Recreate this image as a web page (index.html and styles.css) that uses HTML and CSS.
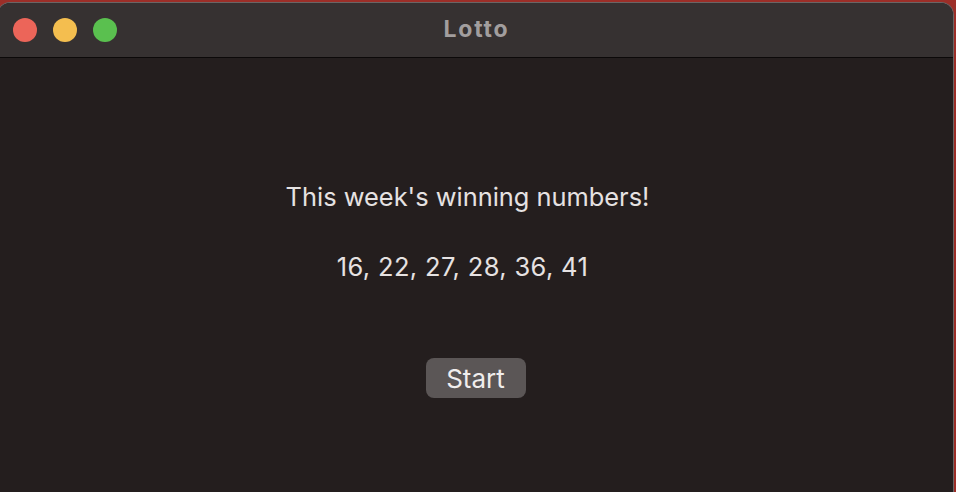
FILE: index.html
```html
<!DOCTYPE html>
<html>
<head>
<meta charset="utf-8">
<link rel="stylesheet" href="styles.css">
</head>
<body>
<div class="window">
  <div class="titlebar">
    <div class="lights">
      <span class="light red"></span>
      <span class="light yellow"></span>
      <span class="light green"></span>
    </div>
    <div class="title">Lotto</div>
  </div>
  <div class="content">
    <p class="headline">This week's winning numbers!</p>
    <p class="numbers">16, 22, 27, 28, 36, 41</p>
    <button class="start">Start</button>
  </div>
</div>
</body>
</html>
```
FILE: styles.css
```css
html, body {
  margin: 0;
  padding: 0;
  height: 100%;
  overflow: hidden;
}
body {
  background: #9c2e28;
  font-family: Inter, "Open Sans", "Liberation Sans", sans-serif;
}
.window {
  margin: 2px 2px 0 -3px;
  height: 492px;
  background: #241e1e;
  border-radius: 13px 13px 0 0;
  border: 1px solid #6a6565;
  border-bottom: none;
  box-sizing: border-box;
  overflow: hidden;
  display: flex;
  flex-direction: column;
}
.titlebar {
  position: relative;
  height: 55px;
  flex: none;
  background: #363131;
  border-bottom: 1px solid #0c0909;
  display: flex;
  align-items: center;
  justify-content: center;
  padding-bottom: 2px;
  box-sizing: border-box;
}
.lights {
  position: absolute;
  left: 15px;
  top: 15px;
  display: flex;
  gap: 16px;
}
.light {
  width: 24px;
  height: 24px;
  border-radius: 50%;
}
.red { background: #ec6559; }
.yellow { background: #f4be4f; }
.green { background: #5ac04f; }
.title {
  color: #a29e9e;
  font-weight: 700;
  font-size: 23px;
  letter-spacing: 1.8px;
  padding-left: 2px;
}
.content {
  flex: 1;
  display: flex;
  flex-direction: column;
  align-items: center;
  padding-top: 124px;
  color: #e6e2e2;
}
.headline, .numbers {
  margin: 0;
  font-size: 25.4px;
  line-height: 30px;
}
.headline {
  padding-right: 16px;
}
.numbers {
  margin-top: 40px;
  font-size: 25.5px;
  letter-spacing: 0.35px;
  padding-right: 26px;
}
.start {
  margin-top: 76px;
  width: 100px;
  height: 40px;
  border: none;
  border-radius: 8px;
  background: #5b5656;
  color: #f0eded;
  font-family: inherit;
  font-size: 26px;
  padding: 0;
}
```
